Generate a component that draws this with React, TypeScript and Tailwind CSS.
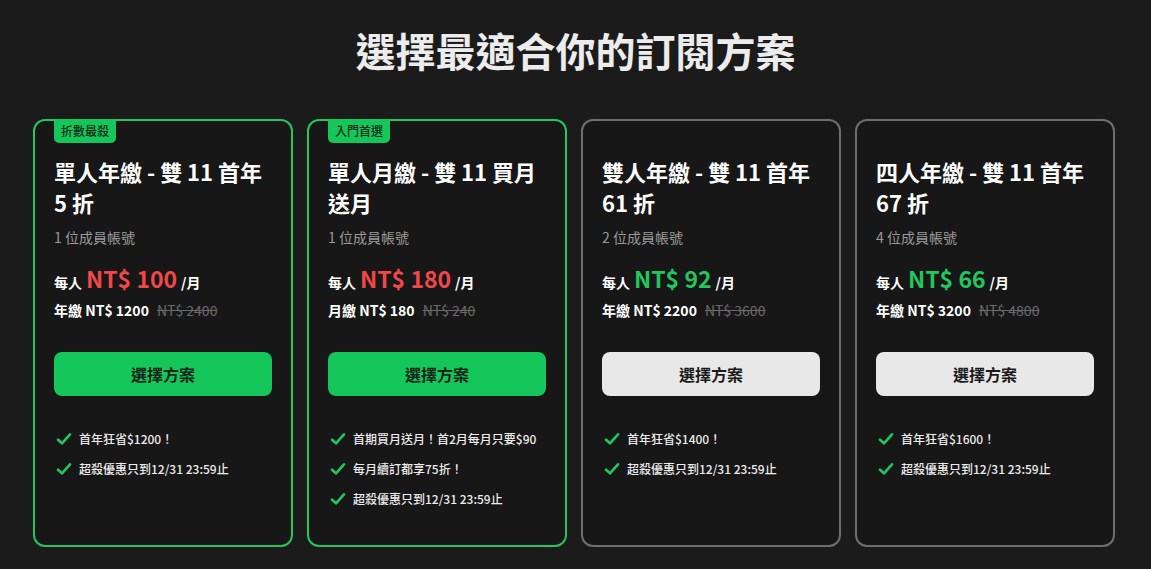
import React from "react";

type Plan = {
  badge?: string;
  title: string;
  members: string;
  price: string;
  hot: boolean;
  totalLabel: string;
  original: string;
  features: string[];
};

const plans: Plan[] = [
  {
    badge: "折數最殺",
    title: "單人年繳 - 雙 11 首年 5 折",
    members: "1 位成員帳號",
    price: "NT$ 100",
    hot: true,
    totalLabel: "年繳 NT$ 1200",
    original: "NT$ 2400",
    features: ["首年狂省$1200！", "超殺優惠只到12/31 23:59止"],
  },
  {
    badge: "入門首選",
    title: "單人月繳 - 雙 11 買月送月",
    members: "1 位成員帳號",
    price: "NT$ 180",
    hot: true,
    totalLabel: "月繳 NT$ 180",
    original: "NT$ 240",
    features: ["首期買月送月！首2月每月只要$90", "每月續訂都享75折！", "超殺優惠只到12/31 23:59止"],
  },
  {
    title: "雙人年繳 - 雙 11 首年 61 折",
    members: "2 位成員帳號",
    price: "NT$ 92",
    hot: false,
    totalLabel: "年繳 NT$ 2200",
    original: "NT$ 3600",
    features: ["首年狂省$1400！", "超殺優惠只到12/31 23:59止"],
  },
  {
    title: "四人年繳 - 雙 11 首年 67 折",
    members: "4 位成員帳號",
    price: "NT$ 66",
    hot: false,
    totalLabel: "年繳 NT$ 3200",
    original: "NT$ 4800",
    features: ["首年狂省$1600！", "超殺優惠只到12/31 23:59止"],
  },
];

function Check() {
  return (
    <svg width="16" height="16" viewBox="0 0 24 24" fill="none" stroke="#22c55e" strokeWidth="4" strokeLinecap="round" strokeLinejoin="round" className="shrink-0">
      <path d="M3 13l6 5.5L21 5" />
    </svg>
  );
}

function Card({ p }: { p: Plan }) {
  return (
    <div
      className={`relative flex flex-col rounded-[12px] border-2 bg-[#171717] px-[19px] pt-[35px] pb-9 ${
        p.hot ? "border-[#22c55e]" : "border-[#6e6e6e]"
      }`}
    >
      {p.badge && (
        <div className="absolute left-[19px] top-[-2px] flex h-[24px] items-center rounded-b-[5px] bg-[#15c65a] px-[7px] text-[12px] font-medium text-[#0f2a17]">
          {p.badge}
        </div>
      )}
      <h2 className="text-[22px] font-bold leading-[31px] text-white">{p.title}</h2>
      <div className="mt-[9px] text-[14px] leading-[20px] text-[#9a9a9a]">{p.members}</div>
      <div className="mt-[15px] flex items-baseline gap-[4px] text-white">
        <span className="text-[14px] font-bold">每人</span>
        <span className={`text-[23px] font-bold leading-[32px] ${p.hot ? "text-[#f04848]" : "text-[#22c55e]"}`}>{p.price}</span>
        <span className="text-[14px] font-bold">/月</span>
      </div>
      <div className="mt-[4px] flex items-center gap-[8px] text-[14px] leading-[24px]">
        <span className="font-bold text-white">{p.totalLabel}</span>
        <span className="text-[#6a6a6a] line-through">{p.original}</span>
      </div>
      <button
        className={`mt-[30px] h-[44px] w-full rounded-[8px] text-[16px] font-bold ${
          p.hot ? "bg-[#15c65a] text-[#10261a]" : "bg-[#e8e8e8] text-[#1a1a1a]"
        }`}
      >
        選擇方案
      </button>
      <ul className="mt-[33px] flex flex-col gap-[10px]">
        {p.features.map((f) => (
          <li key={f} className="flex items-center gap-[7px] pl-[2px] text-[12px] font-medium leading-[20px] text-[#ececec]">
            <Check />
            <span className="whitespace-nowrap">{f}</span>
          </li>
        ))}
      </ul>
    </div>
  );
}

export default function App() {
  return (
    <div
      className="min-h-[569px] w-full bg-[#1b1b1b] pb-6"
      style={{ fontFamily: '"Noto Sans CJK TC", "Noto Sans", sans-serif' }}
    >
      <h1 className="pt-[26px] text-center text-[40px] font-bold leading-[48px] text-[#ececec]">選擇最適合你的訂閱方案</h1>
      <div className="ml-[33px] mt-[45px] grid w-[1082px] grid-cols-4 gap-[14px]">
        {plans.map((p) => (
          <Card key={p.title} p={p} />
        ))}
      </div>
    </div>
  );
}
